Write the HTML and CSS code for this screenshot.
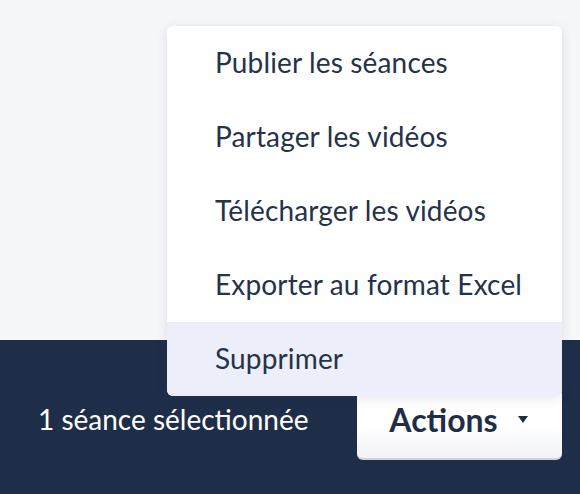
FILE: index.html
```html
<!DOCTYPE html>
<html lang="fr">
<head>
<meta charset="utf-8">
<link rel="stylesheet" href="styles.css">
</head>
<body>
<div class="page">
  <div class="content"></div>
  <div class="bar">
    <span class="count">1 séance sélectionnée</span>
    <button class="actions">Actions <span class="caret"></span></button>
  </div>
  <ul class="menu">
    <li class="item">Publier les séances</li>
    <li class="item">Partager les vidéos</li>
    <li class="item">Télécharger les vidéos</li>
    <li class="item">Exporter au format Excel</li>
    <li class="item active">Supprimer</li>
  </ul>
</div>
</body>
</html>
```
FILE: styles.css
```css
html, body {
  margin: 0;
  padding: 0;
}
body {
  font-family: "Lato", "Noto Sans", sans-serif;
  background: #f6f7f9;
}
.page {
  position: relative;
  width: 580px;
  height: 494px;
  display: flex;
  flex-direction: column;
  overflow: hidden;
}
.content {
  height: 340px;
  flex: none;
}
.bar {
  flex: 1;
  background: #1f2e48;
  display: flex;
  align-items: flex-start;
  justify-content: space-between;
  padding: 48px 18px 0 38px;
}
.count {
  color: #ffffff;
  font-size: 28px;
  line-height: 62px;
}
.actions {
  width: 205px;
  height: 72px;
  box-sizing: border-box;
  border: none;
  border-bottom: 2px solid #cfd2da;
  border-radius: 6px;
  background: linear-gradient(#ffffff 55%, #f1f2f5);
  color: #1f2e48;
  font-family: inherit;
  font-size: 32px;
  font-weight: 700;
  display: flex;
  align-items: center;
  justify-content: center;
  gap: 20px;
  padding: 0 2px 8px 0;
}
.caret {
  width: 0;
  height: 0;
  border-left: 5px solid transparent;
  border-right: 5px solid transparent;
  border-top: 7px solid #1f2e48;
}
.menu {
  position: absolute;
  left: 167px;
  top: 26px;
  width: 395px;
  margin: 0;
  padding: 0;
  list-style: none;
  background: #ffffff;
  border-radius: 6px;
  box-shadow: 0 2px 12px rgba(30, 40, 70, 0.12);
  overflow: hidden;
}
.item {
  height: 74px;
  line-height: 72px;
  padding-left: 48px;
  color: #25324b;
  font-size: 28px;
  letter-spacing: 0.15px;
}
.item.active {
  background: #eceef9;
}
```
